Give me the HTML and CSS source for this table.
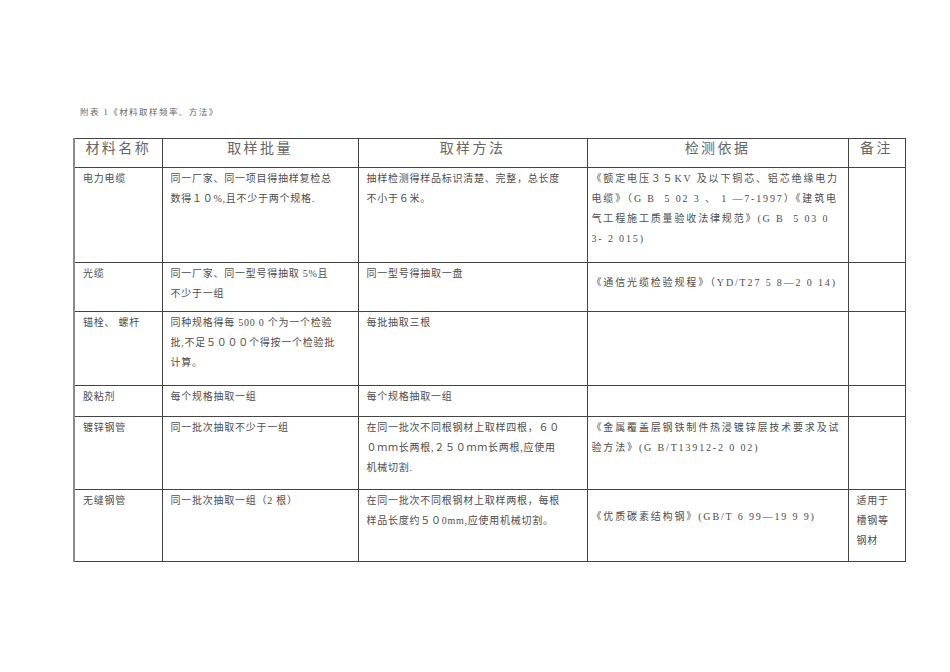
FILE: index.html
```html
<!DOCTYPE html>
<html lang="zh-CN">
<head>
<meta charset="utf-8">
<title>附表1《材料取样频率、方法》</title>
<link rel="stylesheet" href="styles.css">
</head>
<body>
<div class="page">
  <p class="caption">附表 1《材料取样频率、方法》</p>
  <table class="sheet">
    <colgroup>
      <col class="c1"><col class="c2"><col class="c3"><col class="c4"><col class="c5">
    </colgroup>
    <thead>
      <tr class="rh">
        <th>材料名称</th>
        <th>取样批量</th>
        <th>取样方法</th>
        <th>检测依据</th>
        <th>备注</th>
      </tr>
    </thead>
    <tbody>
      <tr class="r1">
        <td>电力电缆</td>
        <td>同一厂家、同一项目得抽样复检总<br>数得１０%,且不少于两个规格.</td>
        <td>抽样检测得样品标识清楚、完整，总长度<br>不小于６米。</td>
        <td class="basis">《额定电压３５KV 及以下铜芯、铝芯绝缘电力<br>电缆》（G B&nbsp; 5 02 3 、 1 —7-1997）《建筑电<br>气工程施工质量验收法律规范》(G B&nbsp; 5 03 0<br>3- 2 015)</td>
        <td></td>
      </tr>
      <tr class="r2">
        <td>光缆</td>
        <td>同一厂家、同一型号得抽取 5%且<br>不少于一组</td>
        <td>同一型号得抽取一盘</td>
        <td class="basis shift1">《通信光缆检验规程》（YD/T27 5 8—2 0 14)</td>
        <td></td>
      </tr>
      <tr class="r3">
        <td>锚栓、 螺杆</td>
        <td>同种规格得每 500 0 个为一个检验<br>批,不足５０００个得按一个检验批<br>计算。</td>
        <td>每批抽取三根</td>
        <td></td>
        <td></td>
      </tr>
      <tr class="r4">
        <td>胶粘剂</td>
        <td>每个规格抽取一组</td>
        <td>每个规格抽取一组</td>
        <td></td>
        <td></td>
      </tr>
      <tr class="r5">
        <td>镀锌钢管</td>
        <td>同一批次抽取不少于一组</td>
        <td>在同一批次不同根钢材上取样四根，６０<br>０ｍｍ长两根,２５０ｍｍ长两根,应使用<br>机械切割.</td>
        <td class="basis">《金属覆盖层钢铁制件热浸镀锌层技术要求及试<br>验方法》(G B/T13912-2 0 02)</td>
        <td></td>
      </tr>
      <tr class="r6">
        <td>无缝钢管</td>
        <td>同一批次抽取一组（2 根）</td>
        <td>在同一批次不同根钢材上取样两根，每根<br>样品长度约５０0mm,应使用机械切割。</td>
        <td class="basis shift2">《优质碳素结构钢》(GB/T 6 99—19 9 9)</td>
        <td>适用于<br>槽钢等<br>钢材</td>
      </tr>
    </tbody>
  </table>
</div>
</body>
</html>
```
FILE: styles.css
```css
html, body {
  margin: 0;
  padding: 0;
  background: #ffffff;
}

body {
  font-family: "Liberation Serif", "Noto Sans CJK SC", serif;
  color: #4a4a4a;
}

.page {
  width: 950px;
  height: 672px;
  padding: 106px 0 0 73px;
  box-sizing: border-box;
}

.caption {
  margin: 0 0 20px 7px;
  font-size: 8.5px;
  line-height: 12px;
  letter-spacing: 1.45px;
  color: #666;
}

.sheet {
  border-collapse: collapse;
  table-layout: fixed;
  width: 831px;
  border-left: 2px solid #8a8a8a;
}

.c1 { width: 88px; }
.c2 { width: 196px; }
.c3 { width: 229px; }
.c4 { width: 261px; }
.c5 { width: 57px; }

.sheet th,
.sheet td {
  border: 1px solid #444;
  vertical-align: top;
  padding: 0 6px 0 8px;
}

.sheet th {
  font-weight: normal;
  font-size: 14px;
  line-height: 20px;
  letter-spacing: 2.4px;
  color: #666;
  text-align: center;
  padding: 0 2px;
}

.sheet td {
  font-size: 10px;
  line-height: 20px;
  letter-spacing: 0.75px;
  padding-top: 1px;
  color: #4d4d4d;
  white-space: nowrap;
}

.sheet td.basis {
  padding-left: 4px;
  letter-spacing: 1.85px;
}

.sheet td.shift1 { padding-top: 10px; }
.sheet td.shift2 { padding-top: 17px; }

.rh { height: 29px; }
.r1 { height: 95px; }
.r2 { height: 49px; }
.r3 { height: 74px; }
.r4 { height: 31px; }
.r5 { height: 73px; }
.r6 { height: 72px; }
```
